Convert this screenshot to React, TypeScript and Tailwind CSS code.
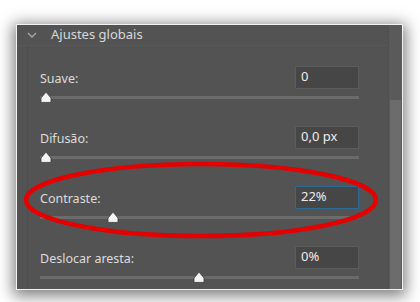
import React from 'react';

const font = { fontFamily: '"Noto Sans", "Open Sans", sans-serif' };

type Row = { label: string; value: string; pos: number; focused?: boolean };

const rows: Row[] = [
  { label: 'Suave:', value: '0', pos: 0 },
  { label: 'Difusão:', value: '0,0 px', pos: 0 },
  { label: 'Contraste:', value: '22%', pos: 0.22, focused: true },
  { label: 'Deslocar aresta:', value: '0%', pos: 0.5 },
];

const Thumb = () => (
  <svg width="12" height="11" viewBox="0 0 12 11">
    <path d="M6 0.6 Q6.6 0.6 7.2 1.4 L11 6 L11 10.4 L1 10.4 L1 6 L4.8 1.4 Q5.4 0.6 6 0.6 Z" fill="#f4f4f4" stroke="#3a3a3a" strokeWidth="0.8" />
  </svg>
);

const SliderRow: React.FC<{ row: Row }> = ({ row }) => (
  <div className="flex flex-col h-[60px]">
    <div className="flex items-center justify-between h-[23px]">
      <span className="text-[12.5px] text-[#dcdcdc] leading-none mt-[4px]">{row.label}</span>
      <div
        className={`w-[64px] h-[23px] flex items-center pl-[5px] bg-[#464646] text-[13px] text-[#ececec] border ${
          row.focused ? 'border-[#2f6a95]' : 'border-[#5c5c5c]'
        }`}
      >
        {row.value}
      </div>
    </div>
    <div className="relative h-[12px] mt-[3px]">
      <div className="absolute left-0 right-0 top-[4px] h-[3px] bg-[#6b6b6b]" />
      <div className="absolute top-0" style={{ left: `${row.pos * 306}px` }}>
        <Thumb />
      </div>
    </div>
  </div>
);

export default function App() {
  return (
    <div className="relative w-[420px] h-[302px] bg-white overflow-hidden" style={font}>
      <div className="pt-[24px] pl-[16px]">
        <div className="w-[387px] h-[266px] border border-[#f2f2f2] bg-[#535353] shadow-[0_3px_14px_3px_rgba(0,0,0,0.5)] flex overflow-hidden">
          <div className="flex-1 flex flex-col">
            <div className="h-[29px] flex items-center pl-[10px] border-b border-[#585858]">
              <svg width="10" height="6" viewBox="0 0 10 6" className="mt-[1px]">
                <path d="M1 1 L5 5 L9 1" fill="none" stroke="#a8a8a8" strokeWidth="1.3" />
              </svg>
              <span className="ml-[14px] text-[13px] text-[#d8d8d8]">Ajustes globais</span>
            </div>
            <div className="flex-1 flex">
              <div className="w-[11px] border-r border-[#4d4d4d]" />
              <div className="flex-1 pl-[12px] pr-[29px] pt-[20px]">
                {rows.map((r, i) => (
                  <SliderRow key={i} row={r} />
                ))}
              </div>
            </div>
          </div>
          <div className="w-[14px] bg-[#5a5a5a] border-l border-[#4f4f4f] flex flex-col">
            <div className="h-[75px]" />
            <div className="flex-1 mx-[1px] bg-[#6c6c6c]" />
          </div>
        </div>
      </div>
      <svg className="absolute inset-0 pointer-events-none" width="420" height="302">
        <ellipse cx="201" cy="200" rx="175" ry="36" fill="none" stroke="#e40000" strokeWidth="4.5" />
      </svg>
    </div>
  );
}
